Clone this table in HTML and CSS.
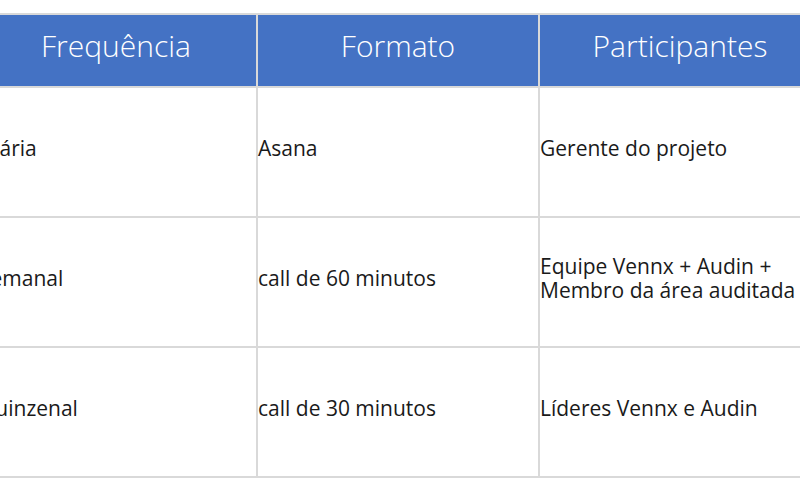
FILE: index.html
```html
<!DOCTYPE html>
<html lang="pt">
<head>
<meta charset="utf-8">
<title>Rituais</title>
<link rel="stylesheet" href="styles.css">
</head>
<body>
<table class="grid">
  <colgroup>
    <col class="col">
    <col class="col">
    <col class="col">
  </colgroup>
  <thead>
    <tr class="head-row">
      <th>Frequência</th>
      <th>Formato</th>
      <th>Participantes</th>
    </tr>
  </thead>
  <tbody>
    <tr class="row">
      <td class="first">Diária</td>
      <td>Asana</td>
      <td>Gerente do projeto</td>
    </tr>
    <tr class="row">
      <td class="first">Semanal</td>
      <td>call de 60 minutos</td>
      <td>Equipe Vennx + Audin +<br>Membro da área auditada</td>
    </tr>
    <tr class="row">
      <td class="first">Quinzenal</td>
      <td>call de 30 minutos</td>
      <td>Líderes Vennx e Audin</td>
    </tr>
  </tbody>
</table>
</body>
</html>
```
FILE: styles.css
```css
html, body {
  margin: 0;
  padding: 0;
  background: #ffffff;
  overflow: hidden;
}
body {
  width: 800px;
  height: 490px;
  font-family: "Open Sans", "DejaVu Sans", sans-serif;
}
.grid {
  border-collapse: collapse;
  table-layout: fixed;
  width: 846px;
  margin: 13px 0 0 -26px;
}
.col {
  width: 282px;
}
.grid th,
.grid td {
  border: 2px solid #d9d9d9;
  padding: 0;
  vertical-align: middle;
}
.head-row th {
  height: 61px;
  padding-bottom: 10px;
  background: #4472c4;
  color: #ffffff;
  font-weight: 300;
  font-size: 30px;
  line-height: 36px;
  text-align: center;
}
.row td {
  height: 120px;
  padding-bottom: 8px;
  color: #1a1a1a;
  font-size: 21px;
  font-weight: 400;
  line-height: 24px;
  text-align: left;
  white-space: nowrap;
}
.row td.first {
  padding-left: 3px;
}
```
